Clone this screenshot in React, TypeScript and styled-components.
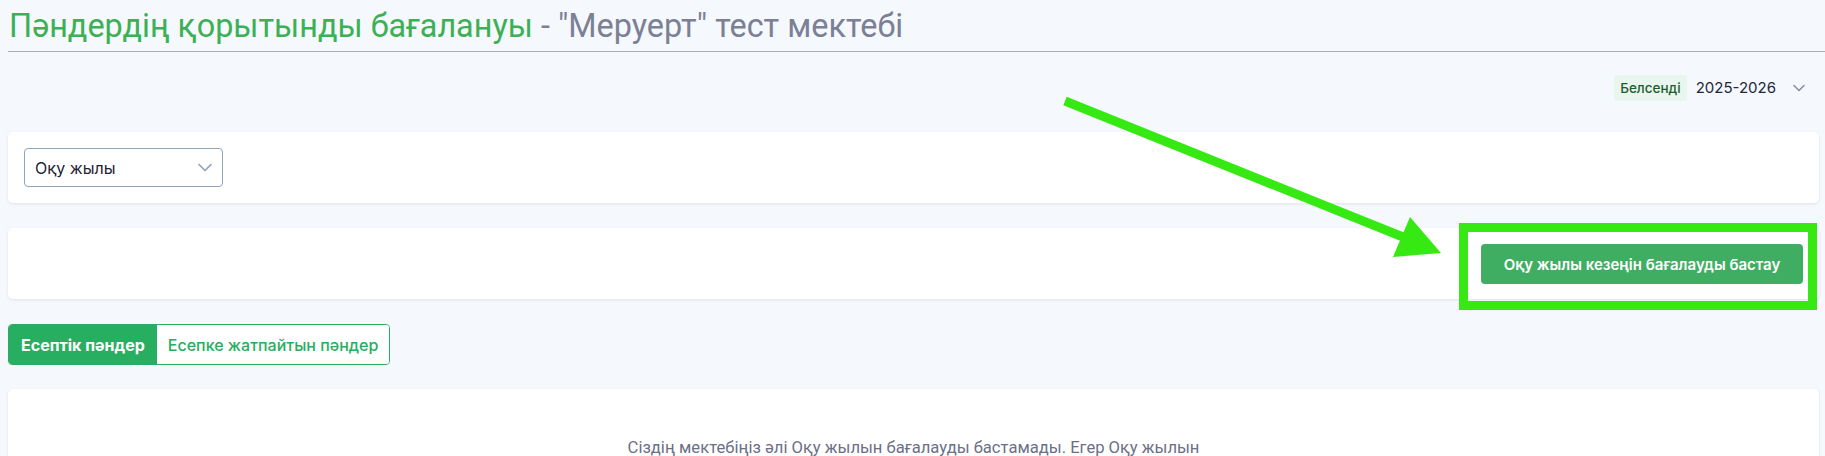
import React from "react";
import styled, { createGlobalStyle } from "styled-components";

const Global = createGlobalStyle`
  html, body { margin: 0; padding: 0; background: #f5f8fc; }
  body { font-family: Inter, "Noto Sans", sans-serif; color: #23273a; }
  * { box-sizing: border-box; }
`;

const Page = styled.div`
  position: relative;
  padding: 0 6px 0 8px;
  display: flex;
  flex-direction: column;
  min-height: 456px;
  overflow: hidden;
`;

const TitleBar = styled.div`
  border-bottom: 1px solid #a9adbd;
  padding: 7px 0 6px 1px;
  margin-right: -6px;
`;

const Title = styled.h1`
  margin: 0;
  font-family: Roboto, "Noto Sans", sans-serif;
  font-weight: 400;
  font-size: 32.4px;
  line-height: 38px;
  color: #7b8096;
  white-space: nowrap;
`;

const Green = styled.span`
  color: #3cb054;
`;

const YearRow = styled.div`
  display: flex;
  justify-content: flex-end;
  align-items: flex-start;
  gap: 9px;
  padding: 23px 14px 0 0;
  height: 80px;
`;

const Badge = styled.span`
  background: #e9f6ed;
  color: #1f5d31;
  font-size: 13.5px;
  font-weight: 500;
  padding: 5px 6px;
  border-radius: 4px;
  line-height: 16px;
`;

const YearText = styled.span`
  font-size: 15px;
  line-height: 26px;
  color: #23273a;
`;

const Chevron = styled.span`
  display: flex;
  align-items: center;
  height: 26px;
  margin-left: 8px;
  color: #7b8096;
`;

const Card = styled.div`
  position: relative;
  background: #fff;
  border-radius: 5px;
  box-shadow: 0 1px 3px rgba(120, 135, 160, 0.18);
`;

const FilterCard = styled(Card)`
  padding: 16px;
  display: flex;
`;

const ActionCard = styled(Card)`
  margin-top: 25px;
  padding: 16px 16px 15px;
  display: flex;
  justify-content: flex-end;
`;

const Select = styled.div`
  width: 199px;
  height: 39px;
  border: 1px solid #8fa6b8;
  border-radius: 4px;
  display: flex;
  align-items: center;
  justify-content: space-between;
  padding: 0 10px;
  font-size: 16px;
  color: #1f2333;
`;

const ButtonWrap = styled.div`
  position: relative;
`;

const PrimaryButton = styled.button`
  width: 322px;
  height: 40px;
  border: none;
  border-radius: 4px;
  background: #40ae62;
  color: #fff;
  font-family: Inter, "Noto Sans", sans-serif;
  font-size: 15px;
  font-weight: 600;
  cursor: pointer;
`;

const Highlight = styled.div`
  position: absolute;
  left: -22px;
  top: -21px;
  right: -14px;
  bottom: -26px;
  border: 9px solid #36e912;
  pointer-events: none;
`;

const Tabs = styled.div`
  margin-top: 25px;
  display: flex;
  align-self: flex-start;
  border: 1px solid #27ae60;
  border-radius: 4px;
  overflow: hidden;
`;

const Tab = styled.button<{ $active?: boolean }>`
  height: 39px;
  border: none;
  padding: 0 ${(p) => (p.$active ? "12px" : "11px")};
  font-family: Inter, "Noto Sans", sans-serif;
  font-size: 16px;
  font-weight: ${(p) => (p.$active ? 700 : 500)};
  background: ${(p) => (p.$active ? "#27ae60" : "#fff")};
  color: ${(p) => (p.$active ? "#fff" : "#27ae60")};
  cursor: pointer;
`;

const EmptyCard = styled(Card)`
  margin-top: 24px;
  height: 120px;
  padding: 47px 0 0;
  display: flex;
  justify-content: center;
  border-radius: 5px 5px 0 0;
`;

const EmptyText = styled.p`
  margin: 0;
  max-width: 620px;
  text-align: center;
  font-family: Roboto, "Noto Sans", sans-serif;
  font-size: 16.6px;
  line-height: 24px;
  color: #6c7086;
`;

const ArrowSvg = styled.svg`
  position: absolute;
  left: 1050px;
  top: 85px;
  pointer-events: none;
`;

export default function App() {
  return (
    <>
      <Global />
      <Page>
        <TitleBar>
          <Title>
            <Green>Пәндердің қорытынды бағалануы</Green> - "Меруерт" тест мектебі
          </Title>
        </TitleBar>
        <YearRow>
          <Badge>Белсенді</Badge>
          <YearText>2025-2026</YearText>
          <Chevron>
            <svg width="12" height="8" viewBox="0 0 12 8" fill="none">
              <path d="M1 1.5L6 6.5L11 1.5" stroke="#8a8fa3" strokeWidth="1.6" strokeLinecap="round" strokeLinejoin="round" />
            </svg>
          </Chevron>
        </YearRow>
        <FilterCard>
          <Select>
            <span>Оқу жылы</span>
            <svg width="14" height="9" viewBox="0 0 14 9" fill="none">
              <path d="M1 1.5L7 7.5L13 1.5" stroke="#8ea3b5" strokeWidth="1.6" strokeLinecap="round" strokeLinejoin="round" />
            </svg>
          </Select>
        </FilterCard>
        <ActionCard>
          <ButtonWrap>
            <PrimaryButton>Оқу жылы кезеңін бағалауды бастау</PrimaryButton>
            <Highlight />
          </ButtonWrap>
        </ActionCard>
        <Tabs>
          <Tab $active>Есептік пәндер</Tab>
          <Tab>Есепке жатпайтын пәндер</Tab>
        </Tabs>
        <EmptyCard>
          <EmptyText>
            Сіздің мектебіңіз әлі Оқу жылын бағалауды бастамады. Егер Оқу жылын бағалауды бастағыңыз келсе, жоғарыдағы батырманы басыңыз.
          </EmptyText>
        </EmptyCard>
        <ArrowSvg width="400" height="180" viewBox="0 0 400 180">
          <line x1="15" y1="16" x2="353" y2="152" stroke="#36e912" strokeWidth="9" />
          <polygon points="360,132 391,168 343,172" fill="#36e912" />
        </ArrowSvg>
      </Page>
    </>
  );
}
